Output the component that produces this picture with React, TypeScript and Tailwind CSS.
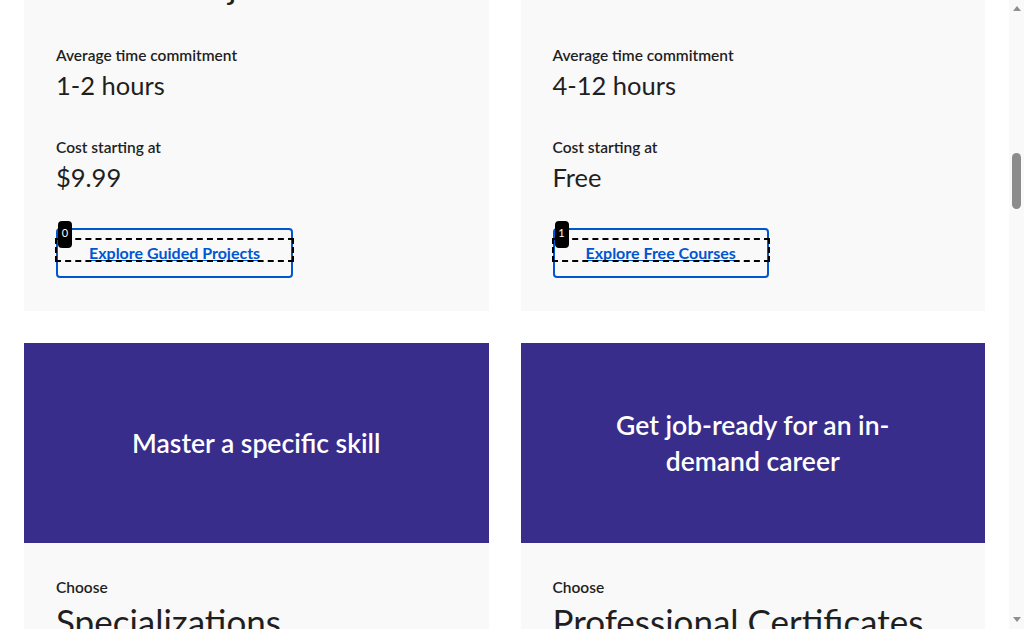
import { useLayoutEffect, useRef } from "react";

type Goal = {
  headline: string;
  kind: string;
  time: string;
  cost: string;
  cta: string;
  mark?: number;
};

const goals: Goal[] = [
  {
    headline: "Learn a job-relevant skill in under 2 hours",
    kind: "Guided Projects",
    time: "1-2 hours",
    cost: "$9.99",
    cta: "Explore Guided Projects",
    mark: 0,
  },
  {
    headline: "Learn from top instructors",
    kind: "Courses",
    time: "4-12 hours",
    cost: "Free",
    cta: "Explore Free Courses",
    mark: 1,
  },
  {
    headline: "Master a specific skill",
    kind: "Specializations",
    time: "1-3 months",
    cost: "$39 / month",
    cta: "Explore Specializations",
  },
  {
    headline: "Get job-ready for an in-demand career",
    kind: "Professional Certificates",
    time: "3-6 months",
    cost: "$39 / month",
    cta: "Explore Certificates",
  },
  {
    headline: "Earn credit towards a Master's degree",
    kind: "MasterTrack® Certificates",
    time: "4-7 months",
    cost: "$2,000",
    cta: "Explore MasterTrack",
  },
  {
    headline: "Earn your Bachelor's or Master's degree",
    kind: "Degrees",
    time: "1-4 years",
    cost: "$9,000",
    cta: "Explore Degrees",
  },
];

function GoalCard({ goal }: { goal: Goal }) {
  return (
    <div className="flex flex-col">
      <div className="h-[200px] bg-[#382d8b] flex items-center justify-center px-16 text-center">
        <h3 className="text-[26.5px] leading-9 font-semibold text-white">{goal.headline}</h3>
      </div>
      <div className="bg-[#f9f9f9] px-8 pt-8 pb-[33px] flex-1">
        <p className="text-[15.5px] leading-6 font-semibold text-[#1f1f1f]">Choose</p>
        <h4 className="text-[35px] leading-[45px] text-[#1f1f1f]">{goal.kind}</h4>

        <div className="mt-[37px] flex flex-col gap-[34px]">
          <div>
            <p className="text-[15.5px] leading-5 font-semibold text-[#1f1f1f]">Average time commitment</p>
            <p className="mt-[2px] text-[25.5px] leading-9 text-[#1f1f1f]">{goal.time}</p>
          </div>
          <div>
            <p className="text-[15.5px] leading-5 font-semibold text-[#1f1f1f]">Cost starting at</p>
            <p className="mt-[2px] text-[25.5px] leading-9 text-[#1f1f1f]">{goal.cost}</p>
          </div>
        </div>

        <button className="relative mt-[33px] h-[50px] px-[31px] rounded border-2 border-[#0056d2] text-base font-bold text-[#0056d2] underline">
          {goal.cta}
          {goal.mark !== undefined && (
            <>
              {/* set-of-marks overlay */}
              <span className="absolute -left-[3px] -right-[3px] top-[8px] h-[24px] border-2 border-dashed border-black pointer-events-none" />
              <span className="absolute left-0 -top-[9px] w-[14px] h-[27px] rounded-sm bg-black text-white text-[11px] leading-none pt-[6px] text-center font-normal no-underline">
                {goal.mark}
              </span>
            </>
          )}
        </button>
      </div>
    </div>
  );
}

function ScrollRail() {
  return (
    <div className="w-[15px] shrink-0 bg-[#f9f9f9] flex flex-col items-center">
      <div className="mt-[6px] w-0 h-0 border-x-[4.5px] border-x-transparent border-b-[5px] border-b-[#8f8f8f]" />
      <div className="mt-[142px] w-[9px] h-[56px] rounded-full bg-[#8c8c8c]" />
      <div className="flex-1" />
      <div className="mb-[7px] w-0 h-0 border-x-[4.5px] border-x-transparent border-t-[5px] border-t-[#8f8f8f]" />
    </div>
  );
}

export default function App() {
  const scroller = useRef<HTMLDivElement>(null);
  const grid = useRef<HTMLDivElement>(null);

  useLayoutEffect(() => {
    if (scroller.current && grid.current) {
      scroller.current.scrollTop = grid.current.offsetTop + 293;
    }
  }, []);

  return (
    <div className="flex h-screen bg-white font-['Lato',sans-serif] text-[#1f1f1f]">
      <div
        ref={scroller}
        className="relative flex-1 overflow-y-scroll [scrollbar-width:none] [&::-webkit-scrollbar]:hidden"
      >
        <section className="px-6 pt-24 pb-16">
          <h1 className="text-[44px] leading-[56px] font-semibold">Achieve your goals with Coursera</h1>
          <p className="mt-4 text-lg">
            Whether you want to develop as a professional or discover a new hobby, there's an online course for you.
          </p>
        </section>

        <section className="px-6 pb-16">
          <h2 className="text-[32px] leading-10 font-semibold text-center">Find the right learning path for you</h2>
          <div ref={grid} className="mt-10 grid grid-cols-2 gap-8">
            {goals.map((g) => (
              <GoalCard key={g.kind} goal={g} />
            ))}
          </div>
        </section>

        <footer className="px-6 py-16 bg-[#f5f7f8] text-sm">
          <p>© 2021 Coursera Inc. All rights reserved.</p>
        </footer>
      </div>
      <ScrollRail />
    </div>
  );
}
